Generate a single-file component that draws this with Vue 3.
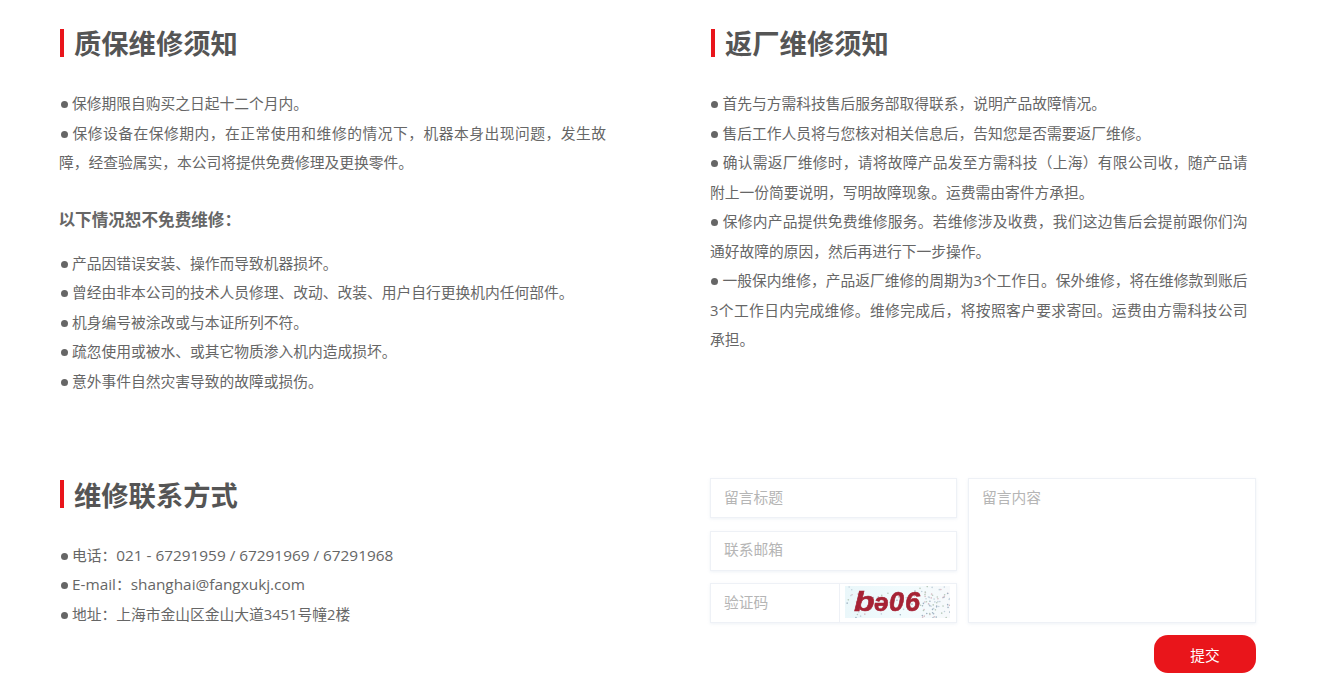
<script setup>
const warranty = ['保修期限自购买之日起十二个月内。', '保修设备在保修期内，在正常使用和维修的情况下，机器本身出现问题，发生故障，经查验属实，本公司将提供免费修理及更换零件。']
const excluded = ['产品因错误安装、操作而导致机器损坏。', '曾经由非本公司的技术人员修理、改动、改装、用户自行更换机内任何部件。', '机身编号被涂改或与本证所列不符。', '疏忽使用或被水、或其它物质渗入机内造成损坏。', '意外事件自然灾害导致的故障或损伤。']
const factory = ['首先与方需科技售后服务部取得联系，说明产品故障情况。', '售后工作人员将与您核对相关信息后，告知您是否需要返厂维修。', '确认需返厂维修时，请将故障产品发至方需科技（上海）有限公司收，随产品请附上一份简要说明，写明故障现象。运费需由寄件方承担。', '保修内产品提供免费维修服务。若维修涉及收费，我们这边售后会提前跟你们沟通好故障的原因，然后再进行下一步操作。', '一般保内维修，产品返厂维修的周期为3个工作日。保外维修，将在维修款到账后3个工作日内完成维修。维修完成后，将按照客户要求寄回。运费由方需科技公司承担。']
const hash = (n) => {
  const v = Math.sin(n * 12.9898) * 43758.5453
  return v - Math.floor(v)
}
const dots = Array.from({ length: 110 }, (_, i) => ({
  x: i < 70 ? 75 + hash(i + 1) * 30 : hash(i + 1) * 75,
  y: hash(i + 200) * 32,
  c: ['#9fb2c2', '#c3d2dc', '#b7cabb', '#d6bcc4'][i % 4]
}))
</script>

<template>
  <main class="page">
    <section class="col">
      <h2 class="title">质保维修须知</h2>
      <ul class="list">
        <li v-for="t in warranty" :key="t">{{ t }}</li>
      </ul>
      <h3 class="sub">以下情况恕不免费维修：</h3>
      <ul class="list">
        <li v-for="t in excluded" :key="t">{{ t }}</li>
      </ul>
    </section>
    <section class="col right-col">
      <h2 class="title">返厂维修须知</h2>
      <ul class="list narrow">
        <li v-for="t in factory" :key="t">{{ t }}</li>
      </ul>
    </section>
    <section class="col contact">
      <h2 class="title">维修联系方式</h2>
      <ul class="list">
        <li>电话：<span class="latin">021 - 67291959 / 67291969 / 67291968</span></li>
        <li><span class="latin">E-mail</span>：<span class="latin">shanghai@fangxukj.com</span></li>
        <li>地址：上海市金山区金山大道3451号幢2楼</li>
      </ul>
    </section>
    <form class="form" @submit.prevent>
      <div class="fields">
        <div class="stack">
          <div class="box"><input class="field" placeholder="留言标题" /></div>
          <div class="box"><input class="field" placeholder="联系邮箱" /></div>
          <div class="box code">
            <input class="field" placeholder="验证码" />
            <div class="captcha">
              <svg width="105" height="32" viewBox="0 0 105 32">
                <defs>
                  <linearGradient id="cap" x1="0" x2="1" y1="0" y2="0">
                    <stop offset="0" stop-color="#eaf7fa" />
                    <stop offset="0.55" stop-color="#f1fbfd" />
                    <stop offset="1" stop-color="#f7f9fb" />
                  </linearGradient>
                  <filter id="soft"><feGaussianBlur stdDeviation="0.4" /></filter>
                </defs>
                <rect width="105" height="32" fill="url(#cap)" />
                <circle v-for="(d, i) in dots" :key="i" :cx="d.x" :cy="d.y" r="0.8" :fill="d.c" />
                <g class="captcha-text" filter="url(#soft)">
                  <text transform="translate(9 25) scale(1.2 1)" font-size="28">b</text>
                  <text x="29" y="25" font-size="26">ə</text>
                  <text x="44" y="25" font-size="27">0</text>
                  <text x="60" y="25" font-size="27">6</text>
                </g>
              </svg>
            </div>
          </div>
        </div>
        <div class="box message"><textarea class="field area" placeholder="留言内容"></textarea></div>
      </div>
      <div class="actions"><button class="submit" type="button">提交</button></div>
    </form>
  </main>
</template>

<style scoped>
.page {
  box-sizing: border-box;
  width: 1333px;
  height: 673px;
  overflow: hidden;
  padding: 29px 77px 0 60px;
  display: grid;
  grid-template-columns: 546px 546px;
  grid-template-rows: 449px auto;
  column-gap: 104px;
  font-family: "Open Sans", "Noto Sans CJK SC", sans-serif;
  color: #666;
  background: #fff;
}
.title {
  margin: 0 0 32px;
  padding-left: 10px;
  border-left: 4px solid #e9151b;
  height: 28px;
  line-height: 30px;
  font-size: 27.3px;
  font-weight: 700;
  color: #555;
}
.right-col .title { margin-left: 1px; }
.list {
  list-style: none;
  margin: 0 0 0 -1px;
  padding: 0;
  font-size: 14.75px;
  line-height: 29.5px;
  text-align: justify;
}
.list li::before {
  content: "";
  display: inline-block;
  width: 7px;
  height: 7px;
  margin: 0 4px 1px 2px;
  border-radius: 50%;
  background: #666;
}
.narrow {
  margin-left: 0;
  padding-right: 8.5px;
}
.narrow li::before { margin: 0 4.5px 1px 1px; }
.latin { font-size: 15.35px; }
.sub {
  margin: 27px 0 14px -1.5px;
  font-size: 16.6px;
  line-height: 30px;
  font-weight: 700;
  color: #666;
}
.contact { padding-top: 2px; }
.contact .title { margin-bottom: 32.5px; line-height: 32px; }
.form {
  display: flex;
  flex-direction: column;
  gap: 12px;
}
.fields {
  display: flex;
  gap: 11px;
  height: 145px;
}
.stack {
  width: 247px;
  display: flex;
  flex-direction: column;
  justify-content: space-between;
}
.box {
  box-sizing: border-box;
  border: 1px solid #eef1f6;
  box-shadow: 0 1px 3px rgba(220, 226, 238, 0.45);
  height: 40px;
  background: #fff;
  display: flex;
}
.message { flex: 1; height: 145px; }
.field {
  flex: 1;
  min-width: 0;
  box-sizing: border-box;
  border: 0;
  outline: 0;
  padding: 0 13px 4px;
  font: 14.75px "Noto Sans CJK SC", sans-serif;
  color: #666;
  background: transparent;
}
.field::placeholder { color: #b5b5b5; opacity: 1; }
.area {
  resize: none;
  padding: 8px 13px;
  line-height: 20px;
}
.captcha {
  width: 117px;
  flex: none;
  box-sizing: border-box;
  border-left: 1px solid #eef1f6;
  padding: 2px 0 0 5px;
  line-height: 0;
}
.captcha-text {
  font-family: "Liberation Sans", sans-serif;
  font-weight: 700;
  font-style: italic;
  fill: #a62234;
  stroke: #a62234;
  stroke-width: 0.6px;
}
.actions { display: flex; justify-content: flex-end; }
.submit {
  width: 102px;
  height: 38px;
  border: 0;
  border-radius: 14px;
  background: #e9151b;
  color: #fff;
  font: 14.75px "Noto Sans CJK SC", sans-serif;
}
</style>
